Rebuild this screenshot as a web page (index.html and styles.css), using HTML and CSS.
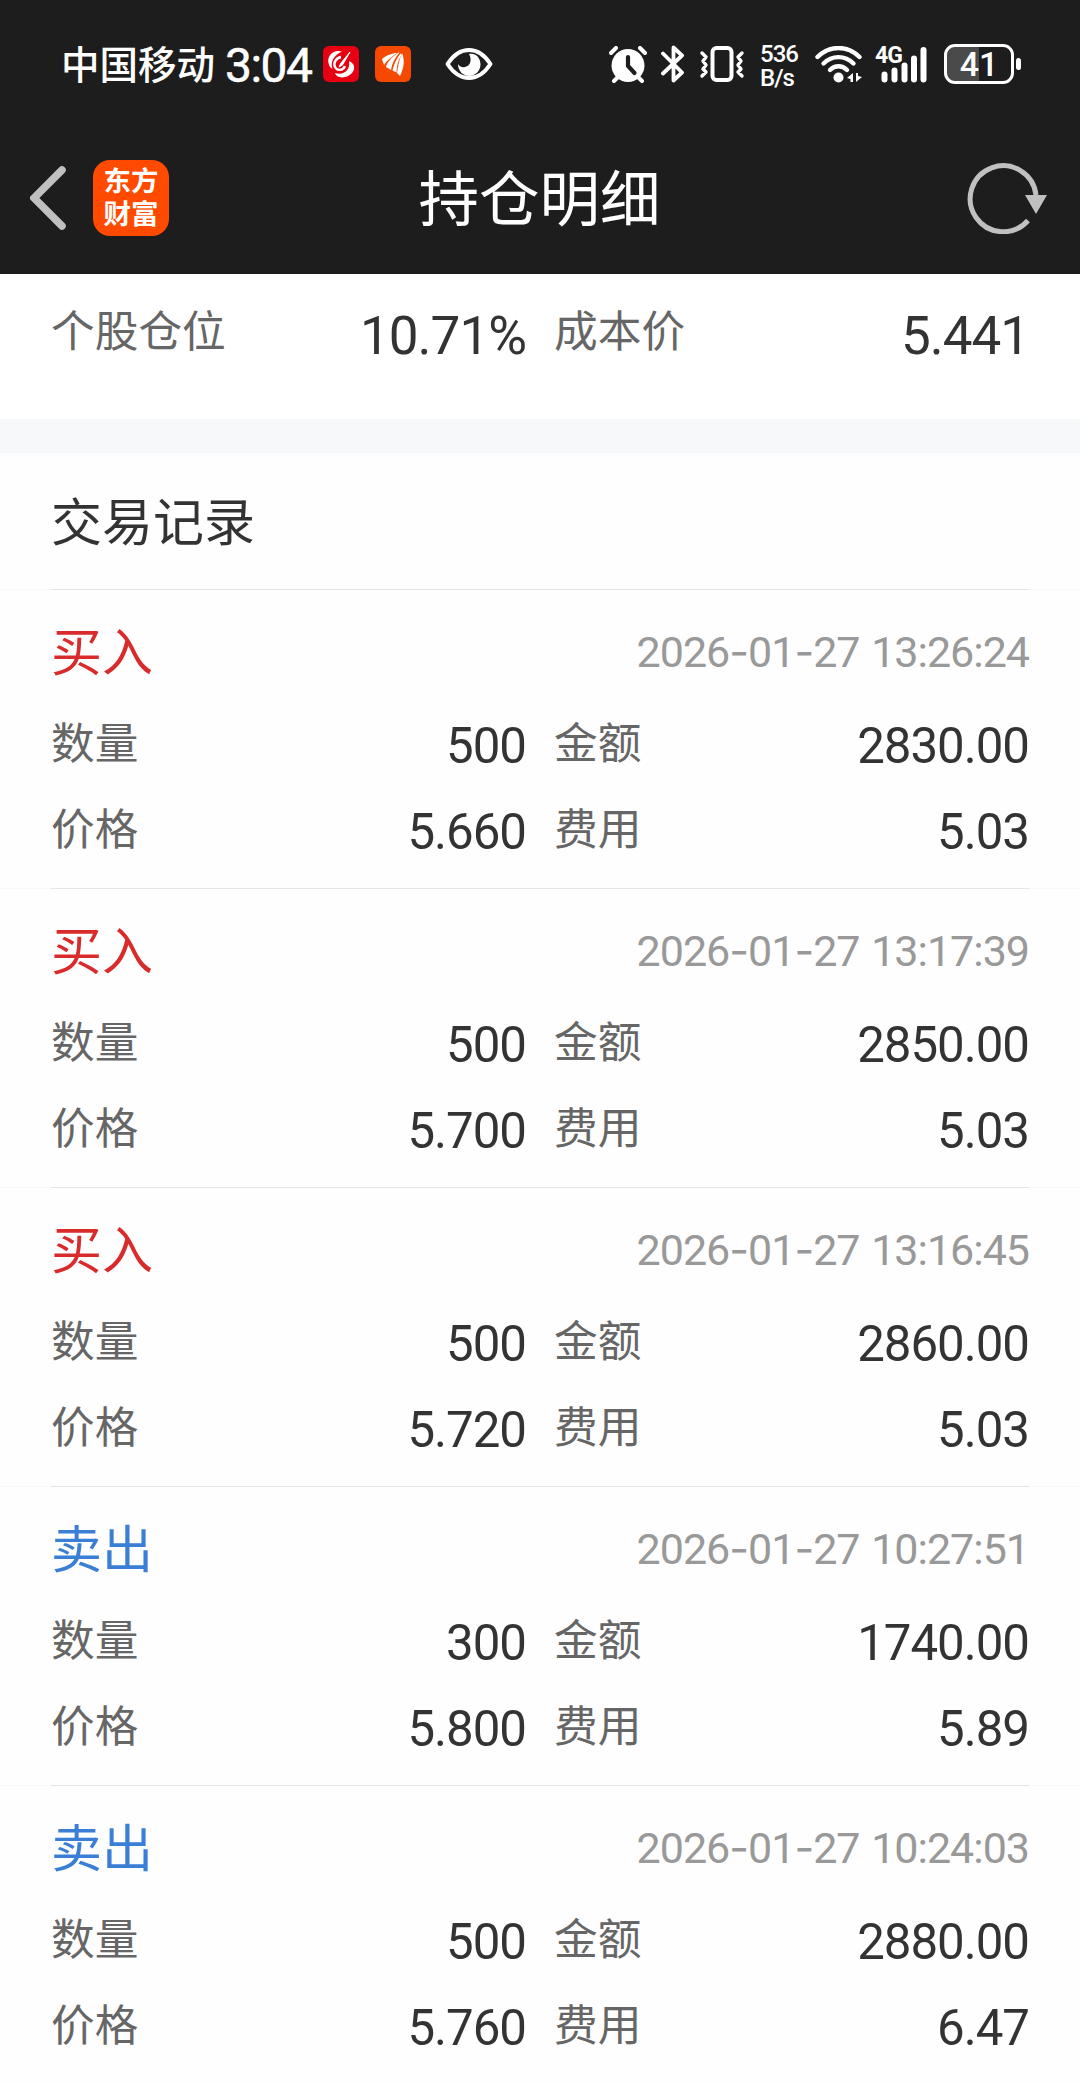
FILE: index.html
```html
<!DOCTYPE html>
<html lang="zh-CN">
<head>
    <meta charset="utf-8">
    <title>持仓明细</title>
    <link rel="stylesheet" href="styles.css">
</head>
<body>
    <header class="header">
        <div class="status-bar">
            <div class="status-left">
                <span class="carrier">中国移动</span>
                <span class="clock">3:04</span>
                <svg class="app-red" width="36" height="36" viewBox="0 0 36 36">
                    <rect width="36" height="36" rx="6" fill="#e60012"/>
                    <path d="M19 5.500C10 3 4 10 5.500 17c.5 3 2 5 4 6C7 16 11 9 19 5.500z" fill="#fff"/>
                    <path d="M26 15c8 3 6 12-1 15-6 3-12 1-13-3 8 3 16-3 14-12z" fill="#fff"/>
                    <path d="M18 11c-5 1-8 6-6 10s8 4 10-1" fill="none" stroke="#fff" stroke-width="2.400"/>
                    <path d="M27 6L18 17l-2 4 3.500-2z" fill="#fff" stroke="#fff"/>
                </svg>
                <svg class="app-orange" width="36" height="36" viewBox="0 0 36 36">
                    <rect width="36" height="36" rx="6" fill="#f54800"/>
                    <path d="M20 7C15 8 10 10 7 13l2 6c3-5 8-8 13-12z" fill="#fff"/>
                    <path d="M23.500 6.500C18 10 12 16 11 21l5 3c1-7 4-12 8.500-17.500z" fill="#fff"/>
                    <path d="M25.500 7.500c-4 5-7 11-8 17l4 2c0-7 2-13 5-18z" fill="#fff"/>
                    <path d="M27 7c3 7 2 15-2 23l-3-3c1-7 2-13 5-20z" fill="#fff"/>
                </svg>
                <svg class="eye" width="48" height="34" viewBox="0 0 48 34">
                    <path d="M2.500 17C9 7 16 3 24 3s15 4 21.500 14C39 27 32 31 24 31S9 27 2.500 17z" fill="none" stroke="#fff" stroke-width="4" stroke-linejoin="round"/>
                    <path d="M24 7c7-1 11.500 4 11.500 10.500S30 29 24.500 29C18 29 13 24 13 17c1 2 4 4 7 3 6-1 7-8 4-13z" fill="#fff"/>
                </svg>
            </div>
            <div class="status-right">
                <svg class="alarm" width="38" height="37" viewBox="0 0 38 37">
                    <circle cx="19" cy="19.500" r="16.500" fill="#fff"/>
                    <path d="M2 7l5-5M36 7l-5-5M5 35l5-5M33 35l-5-5" stroke="#fff" stroke-width="4" stroke-linecap="round"/>
                    <path d="M19 11v9l6.500 7" fill="none" stroke="#1d1d1d" stroke-width="4.200" stroke-linecap="round"/>
                </svg>
                <svg class="bluetooth" width="24" height="38" viewBox="0 0 24 38">
                    <path d="M2 8.500l19 19-8.500 8V2.500l8.500 8L2 28.500" fill="none" stroke="#fff" stroke-width="3.800" stroke-linecap="round" stroke-linejoin="round"/>
                </svg>
                <svg class="vibrate" width="46" height="36" viewBox="0 0 46 36">
                    <rect x="13.500" y="2" width="19" height="32" rx="4" fill="none" stroke="#fff" stroke-width="4"/>
                    <path d="M3 7l4 4-3 4 3 4-3 4 3 3-4 4M43 7l-4 4 3 4-3 4 3 4-3 3 4 4" fill="none" stroke="#fff" stroke-width="3.400" stroke-linecap="round" stroke-linejoin="round"/>
                </svg>
                <span class="net-speed">536<br>B/s</span>
                <svg class="wifi" width="48" height="37" viewBox="0 0 48 37">
                    <g fill="none" stroke="#fff" stroke-width="4.400" stroke-linecap="round">
                        <path d="M2.500 11c12-12 30-12 42 0"/>
                        <path d="M8.500 17.500c8.500-8.500 21.500-8.500 30 0"/>
                        <path d="M15 24c5-5 12-5 17 0"/>
                    </g>
                    <circle cx="23.500" cy="31.500" r="5" fill="#fff"/>
                    <path d="M38 27v9h-2.500v-3L32 32zM41 36v-9h2v3l4 1z" fill="#fff"/>
                </svg>
                <div class="signal">
                    <span class="net-type">4G</span>
                    <svg width="47" height="37" viewBox="0 0 47 37">
                        <path d="M4.500 28.500v5M14.500 24.500v9M24.500 19.500v14M34 12.500v21M43.500 4v29.500" stroke="#fff" stroke-width="6" stroke-linecap="round"/>
                    </svg>
                </div>
                <div class="battery">41</div>
                <div class="battery-tip"></div>
            </div>
        </div>
        <nav class="nav-bar">
            <svg class="back" width="37" height="64" viewBox="0 0 37 64">
                <path d="M32 4L4 32l28 28" fill="none" stroke="#c0c0c0" stroke-width="7.500" stroke-linecap="round"/>
            </svg>
            <div class="brand">东方<br>财富</div>
            <h1 class="title">持仓明细</h1>
            <svg class="refresh" width="82" height="72" viewBox="0 0 82 72">
                <path d="M69 33A33 33 0 1 0 61 58.500" fill="none" stroke="#c0c0c0" stroke-width="5"/>
                <path d="M58 33h22L69 52z" fill="#c0c0c0"/>
            </svg>
        </nav>
    </header>

    <section class="summary">
        <div class="cell"><span class="label">个股仓位</span><span class="value">10.71%</span></div>
        <div class="cell"><span class="label">成本价</span><span class="value">5.441</span></div>
    </section>

    <h2 class="section-title">交易记录</h2>

    <section class="record">
        <div class="record-head">
            <span class="buy">买入</span>
            <time>2026<i>-</i>01<i>-</i>27 13:26:24</time>
        </div>
        <div class="grid">
            <div class="cell"><span class="label">数量</span><span class="value">500</span></div>
            <div class="cell"><span class="label">金额</span><span class="value">2830.00</span></div>
            <div class="cell"><span class="label">价格</span><span class="value">5.660</span></div>
            <div class="cell"><span class="label">费用</span><span class="value">5.03</span></div>
        </div>
    </section>

    <section class="record">
        <div class="record-head">
            <span class="buy">买入</span>
            <time>2026<i>-</i>01<i>-</i>27 13:17:39</time>
        </div>
        <div class="grid">
            <div class="cell"><span class="label">数量</span><span class="value">500</span></div>
            <div class="cell"><span class="label">金额</span><span class="value">2850.00</span></div>
            <div class="cell"><span class="label">价格</span><span class="value">5.700</span></div>
            <div class="cell"><span class="label">费用</span><span class="value">5.03</span></div>
        </div>
    </section>

    <section class="record">
        <div class="record-head">
            <span class="buy">买入</span>
            <time>2026<i>-</i>01<i>-</i>27 13:16:45</time>
        </div>
        <div class="grid">
            <div class="cell"><span class="label">数量</span><span class="value">500</span></div>
            <div class="cell"><span class="label">金额</span><span class="value">2860.00</span></div>
            <div class="cell"><span class="label">价格</span><span class="value">5.720</span></div>
            <div class="cell"><span class="label">费用</span><span class="value">5.03</span></div>
        </div>
    </section>

    <section class="record">
        <div class="record-head">
            <span class="sell">卖出</span>
            <time>2026<i>-</i>01<i>-</i>27 10:27:51</time>
        </div>
        <div class="grid">
            <div class="cell"><span class="label">数量</span><span class="value">300</span></div>
            <div class="cell"><span class="label">金额</span><span class="value">1740.00</span></div>
            <div class="cell"><span class="label">价格</span><span class="value">5.800</span></div>
            <div class="cell"><span class="label">费用</span><span class="value">5.89</span></div>
        </div>
    </section>

    <section class="record">
        <div class="record-head">
            <span class="sell">卖出</span>
            <time>2026<i>-</i>01<i>-</i>27 10:24:03</time>
        </div>
        <div class="grid">
            <div class="cell"><span class="label">数量</span><span class="value">500</span></div>
            <div class="cell"><span class="label">金额</span><span class="value">2880.00</span></div>
            <div class="cell"><span class="label">价格</span><span class="value">5.760</span></div>
            <div class="cell"><span class="label">费用</span><span class="value">6.47</span></div>
        </div>
    </section>
</body>
</html>
```
FILE: styles.css
```css
* {
    box-sizing: border-box;
}
body {
    margin: 0;
    background: #fefefe;
    color: #333;
    font-family: Roboto, "Noto Sans CJK SC", sans-serif;
}
svg {
    display: block;
    flex: none;
}

/* 顶部 */
.header {
    height: 274px;
    background: #1d1d1d;
    color: #fff;
}
.status-bar {
    display: flex;
    justify-content: space-between;
    height: 128px;
    padding: 0 59px 0 61px;
}
.status-left,
.status-right {
    display: flex;
    align-items: center;
}
.carrier {
    width: 154px;
    padding-top: 3px;
    font-size: 38.500px;
    font-weight: 500;
    line-height: 56px;
}
.clock {
    width: 88px;
    margin-left: 10px;
    padding-top: 4px;
    font-size: 48px;
    font-weight: 400;
    line-height: 56px;
    letter-spacing: -1.500px;
    -webkit-text-stroke: .5px #fff;
}
.app-red {
    margin-left: 10px;
}
.app-orange {
    margin-left: 16px;
}
.eye {
    margin-left: 34px;
}
.bluetooth {
    margin-left: 14px;
}
.vibrate {
    margin-left: 14px;
}
.net-speed {
    width: 40px;
    margin: 3px 3px 0 15px;
    font-size: 24px;
    font-weight: 500;
    line-height: 24px;
    letter-spacing: -1px;
}
.wifi {
    margin-left: 12px;
}
.signal {
    position: relative;
    margin-left: 17px;
}
.net-type {
    position: absolute;
    left: -5px;
    top: -2px;
    font-size: 23px;
    font-weight: 700;
    line-height: 24px;
    letter-spacing: -1px;
}
.battery {
    width: 70px;
    height: 40px;
    margin-left: 17px;
    border: 3px solid #fff;
    border-radius: 11px;
    background: linear-gradient(90deg, #4a4a4a 50%, #1d1d1d 50%);
    font-size: 34px;
    font-weight: 500;
    line-height: 35px;
    text-align: center;
}
.battery-tip {
    width: 5px;
    height: 12px;
    margin-left: 2px;
    border-radius: 3px;
    background: #fff;
}

/* 导航栏 */
.nav-bar {
    display: flex;
    align-items: center;
    height: 139px;
    padding: 0 31px 0 30px;
}
.brand {
    width: 76px;
    height: 76px;
    margin-left: 26px;
    padding-top: 5px;
    border-radius: 17px;
    background: #ff4a00;
    font-size: 27.500px;
    font-weight: 700;
    line-height: 33px;
    text-align: center;
}
.title {
    flex: 1;
    margin: 0 57px 0 0;
    padding-top: 7px;
    font-size: 60.500px;
    font-weight: 400;
    line-height: 90px;
    text-align: center;
}

/* 持仓信息 */
.cell {
    display: flex;
    justify-content: space-between;
    align-items: center;
    height: 86px;
}
.label {
    padding-top: 3px;
    color: #666;
    font-size: 43.700px;
    line-height: 64px;
}
.value {
    padding-top: 7px;
    font-size: 49.200px;
    line-height: 58px;
    letter-spacing: -1px;
}
.summary {
    display: grid;
    grid-template-columns: 475px 475px;
    column-gap: 28px;
    height: 145px;
    padding: 13px 51px 0;
    background: #fff;
}
.summary .value {
    padding-top: 11px;
    font-size: 53px;
}
.section-title {
    height: 170px;
    margin: 0;
    padding: 33px 51px 0;
    border-top: 34px solid #f7f8fa;
    font-size: 51px;
    font-weight: 400;
    line-height: 76px;
}

/* 交易记录 */
.record {
    height: 299px;
    padding: 16px 51px 0;
    background: linear-gradient(90deg, #f8f8f8 51px, #e5e5e5 51px, #e5e5e5 1029px, #f8f8f8 1029px) no-repeat 0 0 / 100% 1px;
}
.record-head {
    display: flex;
    justify-content: space-between;
    align-items: center;
    height: 94px;
    font-size: 51px;
    line-height: 74px;
}
.buy,
.sell {
    padding-top: 3px;
}
.buy {
    color: #d92b2b;
}
.sell {
    color: #3a7fd5;
}
time {
    margin-top: -2px;
    color: #999;
    font-size: 43px;
    letter-spacing: -1px;
    word-spacing: 2px;
}
time i {
    font-family: Inter, sans-serif;
    font-style: normal;
}
.grid {
    display: grid;
    grid-template-columns: 475px 475px;
    column-gap: 28px;
}
```
